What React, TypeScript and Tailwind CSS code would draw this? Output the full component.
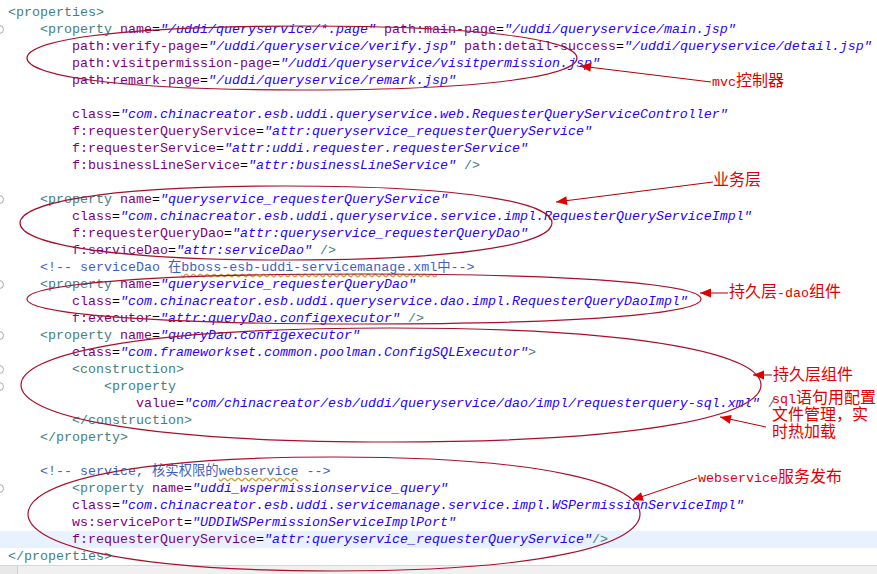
import type { ReactNode } from "react";

const TAG = "text-[#3f7f7f]";
const ATTR = "text-[#7f007f]";
const VAL = "text-[#2a00ff] italic";
const CMT = "text-[#3f5fbf]";

// [indent, text]
const LINES: [number, string][] = [
  [0, '<properties>'],
  [4, '<property name="/uddi/queryservice/*.page" path:main-page="/uddi/queryservice/main.jsp"'],
  [8, 'path:verify-page="/uddi/queryservice/verify.jsp" path:detail-success="/uddi/queryservice/detail.jsp"'],
  [8, 'path:visitpermission-page="/uddi/queryservice/visitpermission.jsp"'],
  [8, 'path:remark-page="/uddi/queryservice/remark.jsp"'],
  [0, ''],
  [8, 'class="com.chinacreator.esb.uddi.queryservice.web.RequesterQueryServiceController"'],
  [8, 'f:requesterQueryService="attr:queryservice_requesterQueryService"'],
  [8, 'f:requesterService="attr:uddi.requester.requesterService"'],
  [8, 'f:businessLineService="attr:businessLineService" />'],
  [0, ''],
  [4, '<property name="queryservice_requesterQueryService"'],
  [8, 'class="com.chinacreator.esb.uddi.queryservice.service.impl.RequesterQueryServiceImpl"'],
  [8, 'f:requesterQueryDao="attr:queryservice_requesterQueryDao"'],
  [8, 'f:serviceDao="attr:serviceDao" />'],
  [4, '#c1'],
  [4, '<property name="queryservice_requesterQueryDao"'],
  [8, 'class="com.chinacreator.esb.uddi.queryservice.dao.impl.RequesterQueryDaoImpl"'],
  [8, 'f:executor="attr:queryDao.configexecutor" />'],
  [4, '<property name="queryDao.configexecutor"'],
  [8, 'class="com.frameworkset.common.poolman.ConfigSQLExecutor">'],
  [8, '<construction>'],
  [12, '<property'],
  // the closing ">" is hidden under the annotation in the screenshot
  [16, 'value="com/chinacreator/esb/uddi/queryservice/dao/impl/requesterquery-sql.xml" /'],
  [8, '</construction>'],
  [4, '</property>'],
  [0, ''],
  [4, '#c2'],
  [8, '<property name="uddi_wspermissionservice_query"'],
  [8, 'class="com.chinacreator.esb.uddi.servicemanage.service.impl.WSPermissionServiceImpl"'],
  [8, 'ws:servicePort="UDDIWSPermissionServiceImplPort"'],
  [8, 'f:requesterQueryService="attr:queryservice_requesterQueryService"/>'],
  [0, '</properties>'],
];

const FOLDS = new Set([1, 11, 16, 19, 21, 22, 28]);
const CURRENT = 31;

function colorize(text: string): ReactNode[] {
  const out: ReactNode[] = [];
  const re = /(<\/?[\w:]+)|(\/?>|\/(?=\s*$))|([\w:.-]+)(=)|("[^"]*")|(\s+)/g;
  let m: RegExpExecArray | null;
  let i = 0;
  while ((m = re.exec(text))) {
    if (m[1]) out.push(<span key={i++} className={TAG}>{m[1]}</span>);
    else if (m[2]) out.push(<span key={i++} className={TAG}>{m[2]}</span>);
    else if (m[3]) {
      out.push(<span key={i++} className={ATTR}>{m[3]}</span>);
      out.push(<span key={i++} className="text-black">=</span>);
    } else if (m[5]) out.push(<span key={i++} className={VAL}>{m[5]}</span>);
    else out.push(<span key={i++}>{m[6]}</span>);
  }
  return out;
}

const wavy = "underline decoration-wavy decoration-[#d0a040] underline-offset-2";

function comment(id: string): ReactNode {
  if (id === "#c1")
    return (
      <span className={CMT}>
        {"<!-- serviceDao 在"}
        <span className={wavy}>bboss-esb-uddi-servicemanage.xml</span>
        {"中-->"}
      </span>
    );
  return (
    <span className={CMT}>
      {"<!-- service, 核实权限的"}
      <span className={wavy}>webservice</span>
      {" -->"}
    </span>
  );
}

function loop(cx: number, cy: number, rx: number, ry: number, kx = 0.72, ky = 0.5) {
  const l = cx - rx, r = cx + rx, t = cy - ry, b = cy + ry;
  return `M${l},${cy} C${l},${cy - ky * ry} ${cx - kx * rx},${t} ${cx},${t} C${cx + kx * rx},${t} ${r},${cy - ky * ry} ${r},${cy} C${r},${cy + ky * ry} ${cx + kx * rx},${b} ${cx},${b} C${cx - kx * rx},${b} ${l},${cy + ky * ry} ${l},${cy} Z`;
}

const ELLIPSES: [number, number, number, number][] = [
  [302, 58, 275, 32],
  [286, 223, 266, 37],
  [364, 299, 337, 25],
  [391, 385, 370, 57],
  [334, 514, 306, 57],
];

// [fromX, fromY, tipX, tipY]
const ARROWS: [number, number, number, number][] = [
  [711, 82, 580, 66],
  [713, 182, 556, 202],
  [728, 293, 700, 293],
  [772, 375, 753, 375],
  [766, 427, 720, 417],
  [697, 478, 632, 500],
];

function head(fx: number, fy: number, tx: number, ty: number) {
  const dx = tx - fx, dy = ty - fy;
  const len = Math.hypot(dx, dy);
  const ux = dx / len, uy = dy / len;
  const bx = tx - ux * 11, by = ty - uy * 11;
  const nx = -uy * 4.5, ny = ux * 4.5;
  return `${tx},${ty} ${bx + nx},${by + ny} ${bx - nx},${by - ny}`;
}

function Label({ x, y, children }: { x: number; y: number; children: ReactNode }) {
  return (
    <div
      className="absolute text-[16px] leading-[17px] text-[#e00000] whitespace-pre font-['Liberation_Mono','Noto_Sans_CJK_SC',monospace]"
      style={{ left: x, top: y }}
    >
      {children}
    </div>
  );
}

const Lat = ({ children }: { children: ReactNode }) => <span className="text-[13.33px]">{children}</span>;

export default function App() {
  return (
    <div className="relative w-[877px] h-[574px] overflow-hidden bg-white flex flex-col">
      <div className="pt-[4px] h-[565px] text-[13.33px] font-['Liberation_Mono','Noto_Sans_CJK_SC',monospace] text-black">
        {LINES.map(([indent, text], i) => (
          <div
            key={i}
            className={`relative h-[17px] leading-[17px] pl-[8px] whitespace-pre ${i === CURRENT ? "bg-[#e8f2fe]" : ""}`}
          >
            {FOLDS.has(i) && (
              <span className="absolute left-[-5px] top-[4px] w-[9px] h-[9px] rounded-full border border-[#a8a8b8] bg-white" />
            )}
            {" ".repeat(indent)}
            {text.startsWith("#c") ? comment(text) : colorize(text)}
          </div>
        ))}
      </div>
      <div className="flex h-[9px] bg-[#f0f0f0] border-t border-[#d8d8d8]">
        <div className="w-[18px] border-r border-[#cfcfcf] bg-[#e8e8e8]" />
      </div>

      <Label x={712} y={74}><Lat>mvc</Lat>控制器</Label>
      <Label x={713} y={173}>业务层</Label>
      <Label x={729} y={285}>持久层<Lat>-dao</Lat>组件</Label>
      <Label x={773} y={368}>持久层组件</Label>
      <Label x={772} y={391}>
        <div><Lat>sql</Lat>语句用配置</div>
        <div>文件管理，实</div>
        <div>时热加载</div>
      </Label>
      <Label x={698} y={470}><Lat>webservice</Lat>服务发布</Label>

      <svg className="absolute inset-0 pointer-events-none" width={877} height={574}>
        {ELLIPSES.map(([cx, cy, rx, ry], i) => (
          <path key={i} d={loop(cx, cy, rx, ry)} fill="none" stroke="#a8102a" strokeWidth={1.2} />
        ))}
        {ARROWS.map(([fx, fy, tx, ty], i) => (
          <g key={i}>
            <line x1={fx} y1={fy} x2={tx} y2={ty} stroke="#b00000" strokeWidth={1} />
            <polygon points={head(fx, fy, tx, ty)} fill="#e00000" />
          </g>
        ))}
      </svg>
    </div>
  );
}
